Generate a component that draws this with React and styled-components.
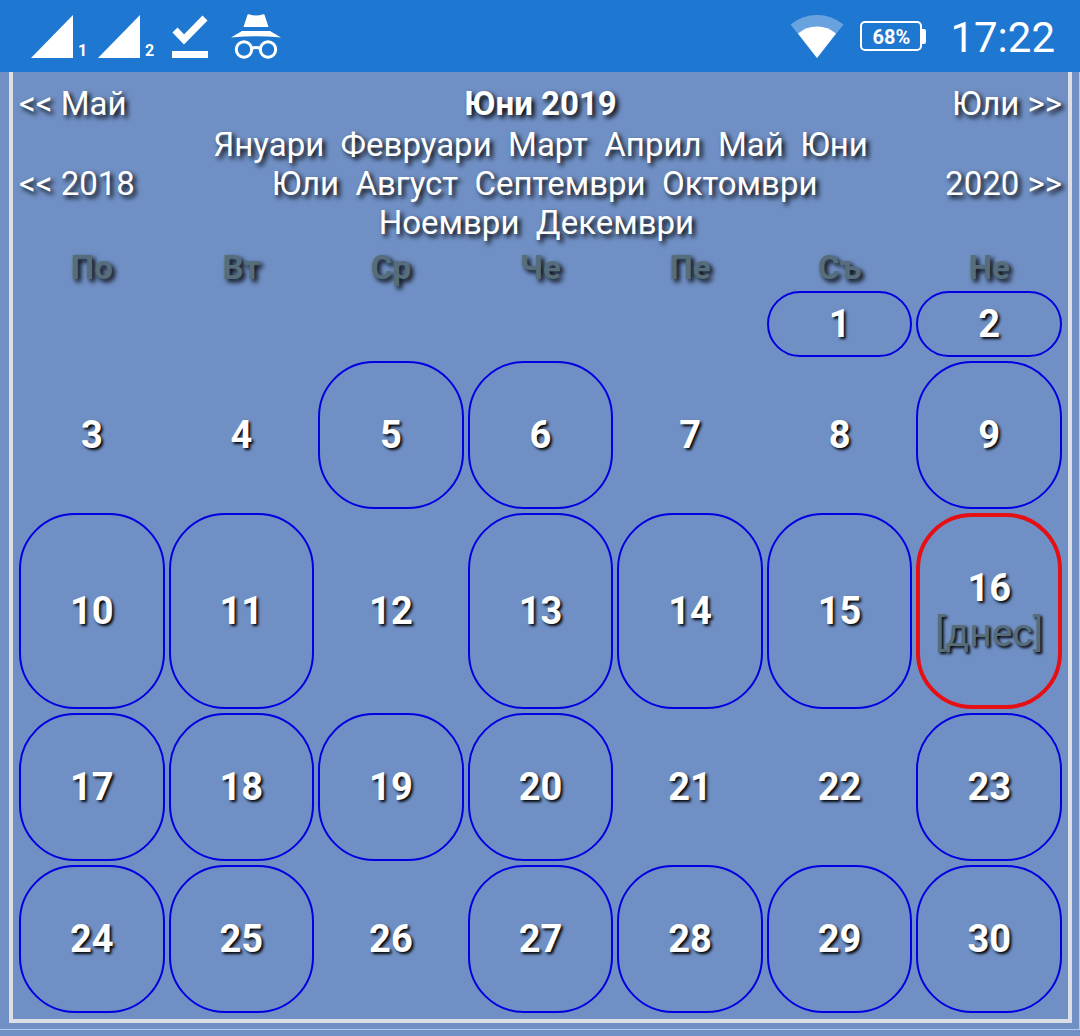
import { Fragment } from 'react';
import styled, { createGlobalStyle } from 'styled-components';

const GlobalStyle = createGlobalStyle`
    *, *::before, *::after {
        box-sizing: border-box;
    }

    body {
        margin: 0;
        background-color: #7090c5;
        color: #fff;
        font-family: Roboto, 'Liberation Sans', sans-serif;
    }

    a {
        color: inherit;
        text-decoration: none;
    }
`;

const StatusBar = styled.header`
    display: flex;
    justify-content: space-between;
    height: 72px;
    padding: 0 25px 0 31px;
    background-color: #1e77d0;
`;

const StatusGroup = styled.div`
    display: flex;
    align-items: center;
    gap: ${({ $gap }) => $gap}px;

    & svg {
        display: block;
        flex: none;
    }
`;

const Signal = styled.div`
    display: flex;
    align-items: flex-end;
    gap: 4px;
    width: 54px;
`;

const SimNumber = styled.span`
    font-size: 16px;
    line-height: 14px;
    font-weight: 700;
`;

const Battery = styled.div`
    display: flex;
    align-items: center;
`;

const BatteryBody = styled.span`
    width: 62px;
    height: 30px;
    border: 2px solid #fff;
    border-radius: 5px;
    font-size: 20px;
    line-height: 28px;
    font-weight: 700;
    text-align: center;
`;

const BatteryTip = styled.span`
    width: 4px;
    height: 15px;
    border-radius: 0 2px 2px 0;
    background-color: #fff;
`;

const Clock = styled.time`
    margin-left: 8px;
    padding-top: 4px;
    font-size: 42px;
    line-height: 48px;
`;

const Page = styled.main`
    padding: 0 7px 6px 9px;
    border-right: 1px solid #b4c9ee;
    border-bottom: 1px solid #b4c9ee;
`;

const Panel = styled.section`
    padding: 12px 2px 2px;
    border: solid #dcdfe6;
    border-width: 0 4px 4px;
`;

const Navigation = styled.nav`
    display: grid;
    grid-template-columns: 18% 1fr 18%;
    align-items: center;
    row-gap: 2px;
    padding: 0 4px 3px;
    font-size: 33px;
    line-height: 39px;
    text-shadow: 3px 3px 5px #000;
`;

const Step = styled.a`
    text-align: ${({ $align }) => $align || 'left'};
    white-space: nowrap;
`;

const Title = styled.h1`
    margin: 0;
    font-size: 33px;
    line-height: 39px;
    font-weight: 700;
    text-align: center;
`;

const Months = styled.div`
    text-align: center;
`;

const Calendar = styled.table`
    width: 100%;
    table-layout: fixed;
    border-collapse: separate;
    border-spacing: 4px;
`;

const Weekday = styled.th`
    height: 38px;
    padding: 0;
    color: #566d7b;
    font-size: 33px;
    line-height: 38px;
    text-shadow: 3px 3px 5px #000;
`;

const Day = styled.td`
    height: ${({ $height }) => $height}px;
    padding: 0;
    border-style: solid;
    border-width: ${({ $today }) => ($today ? 4 : 2)}px;
    border-color: ${({ $today, $marked }) => ($today ? '#e60f14' : $marked ? '#0000e0' : 'transparent')};
    border-radius: ${({ $height }) => Math.min(56, $height / 2)}px;
    font-size: 38px;
    line-height: 45px;
    font-weight: 700;
    text-align: center;
    text-shadow: 2px 2px 3px #000;
`;

const TodayLabel = styled.span`
    display: block;
    color: #566d7b;
    font-size: 39px;
    font-weight: 400;
`;

const months = [
    'Януари', 'Февруари', 'Март', 'Април', 'Май', 'Юни',
    'Юли', 'Август', 'Септември', 'Октомври', 'Ноември', 'Декември',
];

const weekdays = ['По', 'Вт', 'Ср', 'Че', 'Пе', 'Съ', 'Не'];

const weeks = [
    { height: 66, days: [null, null, null, null, null, 1, 2] },
    { height: 148, days: [3, 4, 5, 6, 7, 8, 9] },
    { height: 196, days: [10, 11, 12, 13, 14, 15, 16] },
    { height: 148, days: [17, 18, 19, 20, 21, 22, 23] },
    { height: 148, days: [24, 25, 26, 27, 28, 29, 30] },
];

const today = 16;
const unmarked = [3, 4, 7, 8, 12, 21, 22, 26];

const SignalIcon = () => (
    <svg width="43" height="43" viewBox="0 0 43 43" fill="#fff" aria-hidden="true">
        <path d="M0 43 42 0V43Z" />
    </svg>
);

const CheckIcon = () => (
    <svg width="36" height="43" viewBox="0 0 36 43" aria-hidden="true">
        <path d="M3 15 12 24.5 33 3" fill="none" stroke="#fff" strokeWidth="7" />
        <path d="M0 36H36V43H0Z" fill="#fff" />
    </svg>
);

const IncognitoIcon = () => (
    <svg width="50" height="45" viewBox="0 0 50 45" fill="#fff" aria-hidden="true">
        <path d="M16.500 .7Q16.800 0 17.800 .2Q25 2.700 32.200 .2Q33.200 0 33.500 .7L37.500 13H12.500Z" />
        <path d="M11 17H39L50 23.500Q37 22.300 25 22.300T0 23.500Z" />
        <g fill="none" stroke="#fff" strokeWidth="3">
            <circle cx="13" cy="35.500" r="7.700" />
            <circle cx="37" cy="35.500" r="7.700" />
            <path d="M20.500 34.500Q25 32.500 29.500 34.500" />
        </g>
    </svg>
);

const WifiIcon = () => (
    <svg width="54" height="43" viewBox="0 0 54 43" fill="#fff" aria-hidden="true">
        <path d="M.5 9.500Q12 0 27 0T53.500 9.500L27 43Z" opacity=".33" />
        <path d="M8 18.500Q16 11.500 27 11.500T46 18.500L27 43Z" />
    </svg>
);

// the last two months keep their hard space behind the name
const MonthLink = ({ name, index }) => {
    const link = <a href={`#month-${index + 1}`}>{name}</a>;

    if (index === 0) return link;
    if (index < 10) return <Fragment>{' \u00a0'}{link}</Fragment>;
    return <Fragment>{' '}{link}{'\u00a0'}</Fragment>;
};

const DayCell = ({ day, height }) => {
    if (!day) return <Day $height={height} />;

    const isToday = day === today;
    const marked = !unmarked.includes(day);

    return (
        <Day $height={height} $today={isToday} $marked={marked}>
            {marked ? <a href={`#day-${day}`}>{day}</a> : day}
            {isToday && <TodayLabel>[днес]</TodayLabel>}
        </Day>
    );
};

const App = () => (
    <>
        <GlobalStyle />
        <StatusBar>
            <StatusGroup $gap={20}>
                <StatusGroup $gap={13}>
                    <Signal><SignalIcon /><SimNumber>1</SimNumber></Signal>
                    <Signal><SignalIcon /><SimNumber>2</SimNumber></Signal>
                </StatusGroup>
                <StatusGroup $gap={23}>
                    <CheckIcon />
                    <IncognitoIcon />
                </StatusGroup>
            </StatusGroup>
            <StatusGroup $gap={16}>
                <WifiIcon />
                <Battery>
                    <BatteryBody>68%</BatteryBody>
                    <BatteryTip />
                </Battery>
                <Clock>17:22</Clock>
            </StatusGroup>
        </StatusBar>
        <Page>
            <Panel>
                <Navigation>
                    <Step href="#may">&lt;&lt; Май</Step>
                    <Title>Юни 2019</Title>
                    <Step href="#july" $align="right">Юли &gt;&gt;</Step>
                    <Step href="#2018">&lt;&lt; 2018</Step>
                    <Months>
                        {months.map((name, i) => <MonthLink key={name} name={name} index={i} />)}
                    </Months>
                    <Step href="#2020" $align="right">2020 &gt;&gt;</Step>
                </Navigation>
                <Calendar>
                    <thead>
                        <tr>
                            {weekdays.map(name => <Weekday key={name} scope="col">{name}</Weekday>)}
                        </tr>
                    </thead>
                    <tbody>
                        {weeks.map(({ height, days }, row) => (
                            <tr key={row}>
                                {days.map((day, col) => <DayCell key={col} day={day} height={height} />)}
                            </tr>
                        ))}
                    </tbody>
                </Calendar>
            </Panel>
        </Page>
    </>
);

export default App;
